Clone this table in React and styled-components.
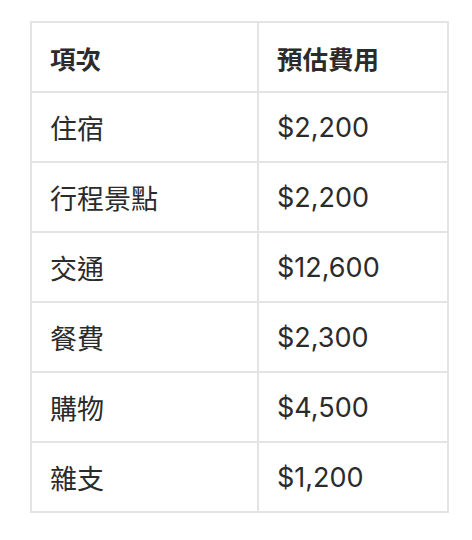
import React from "react";
import styled, { createGlobalStyle } from "styled-components";

const Global = createGlobalStyle`
  html, body { margin: 0; padding: 0; background: #ffffff; }
  body { font-family: Inter, "Noto Sans CJK TC", sans-serif; }
`;

const Page = styled.div`
  padding: 21px 0 0 30px;
`;

const Table = styled.table`
  border-collapse: collapse;
  width: 419px;
  table-layout: fixed;
`;

const Cell = styled.td`
  border: 2px solid #e4e4e4;
  height: 70px;
  padding: 0 0 0 ${(p) => (p.$first ? "18px" : "18px")};
  font-size: ${(p) => (p.$head ? "25.5px" : "27px")};
  color: #2b2b2b;
  font-weight: ${(p) => (p.$head ? 700 : 400)};
  font-family: Inter, "Noto Sans CJK TC", sans-serif;
  vertical-align: middle;
  text-align: left;
  box-sizing: border-box;
  width: ${(p) => (p.$first ? "227px" : "auto")};
`;

const rows = [
  ["住宿", "$2,200"],
  ["行程景點", "$2,200"],
  ["交通", "$12,600"],
  ["餐費", "$2,300"],
  ["購物", "$4,500"],
  ["雜支", "$1,200"],
];

export default function App() {
  return (
    <Page>
      <Global />
      <Table>
        <thead>
          <tr>
            <Cell as="th" $head $first>項次</Cell>
            <Cell as="th" $head>預估費用</Cell>
          </tr>
        </thead>
        <tbody>
          {rows.map(([a, b]) => (
            <tr key={a}>
              <Cell $first>{a}</Cell>
              <Cell>{b}</Cell>
            </tr>
          ))}
        </tbody>
      </Table>
    </Page>
  );
}
